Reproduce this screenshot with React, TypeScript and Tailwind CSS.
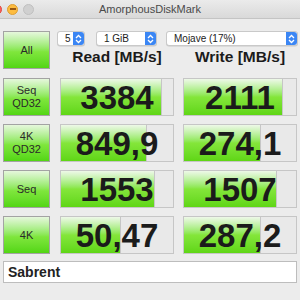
import React from "react";

type Row = {
	label: string[];
	read: string;
	readPct: number;
	write: string;
	writePct: number;
};

const rows: Row[] = [
	{ label: ["Seq", "QD32"], read: "3384", readPct: 90, write: "2111", writePct: 88 },
	{ label: ["4K", "QD32"], read: "849,9", readPct: 77, write: "274,1", writePct: 69 },
	{ label: ["Seq"], read: "1553", readPct: 84, write: "1507", writePct: 83 },
	{ label: ["4K"], read: "50,47", readPct: 54, write: "287,2", writePct: 69 },
];

function Stepper() {
	return (
		<div className="w-[11px] h-full bg-[#3b86f4] rounded-r-[3px] flex items-center justify-center">
			<svg width="7" height="10" viewBox="0 0 7 10" fill="none" stroke="white" strokeWidth="1.3">
				<path d="M1 4 L3.5 1.5 L6 4" />
				<path d="M1 6 L3.5 8.5 L6 6" />
			</svg>
		</div>
	);
}

function Select({ value, className }: { value: string; className: string }) {
	return (
		<div
			className={`h-[15px] bg-white border border-[#c9c9c9] rounded-[3px] flex items-stretch shadow-[0_0.5px_0.5px_rgba(0,0,0,0.15)] ${className}`}
		>
			<span className="flex-1 pl-[7px] text-[10px] leading-[13px] text-[#222]">{value}</span>
			<Stepper />
		</div>
	);
}

function GreenButton({ label }: { label: string[] }) {
	return (
		<div className="w-[47px] h-[38px] shrink-0 border border-[#a3a3a3] bg-linear-to-b from-[#e6f7dc] via-[#7fe63c] via-55% to-[#52d612] flex flex-col items-center justify-center text-[11px] leading-[13px] text-[#2a2a2a]">
			{label.map((l) => (
				<span key={l}>{l}</span>
			))}
		</div>
	);
}

function Cell({ value, pct }: { value: string; pct: number }) {
	return (
		<div className="relative w-[114px] h-[38px] border border-[#c6c6c6] bg-[#e9e9e9] flex">
			<div
				className="h-full bg-linear-to-b from-[#eef8e8] via-[#84e63a] via-50% to-[#5fd614] border-r border-[#c6c6c6]"
				style={{ width: `${pct}%` }}
			/>
			<span className="absolute inset-0 flex items-center justify-center font-bold text-[33px] leading-none text-[#1b1b1b]">
				{value}
			</span>
		</div>
	);
}

export default function App() {
	return (
		<div
			className="w-[300px] h-[300px] overflow-hidden bg-[#ececec] flex flex-col"
			style={{ fontFamily: '"Liberation Sans", Arial, sans-serif' }}
		>
			{/* title bar */}
			<div className="h-[19px] shrink-0 bg-linear-to-b from-[#ebebeb] to-[#d9d9d9] border-b border-[#c4c4c4] grid grid-cols-[1fr_auto_1fr] items-center">
				<div className="flex items-center gap-[5px] ml-[-9px]">
					<span className="w-[11px] h-[11px] rounded-full bg-[#fc605b] border border-[#de4a43]" />
					<span className="w-[11px] h-[11px] rounded-full bg-[#fdbc40] border border-[#de9f34] flex items-center justify-center">
						<span className="w-[6px] h-[1.5px] bg-[#985712]" />
					</span>
					<span className="w-[11px] h-[11px] rounded-full bg-[#d0d0d0] border border-[#c0c0c0]" />
				</div>
				<span className="text-[11px] text-[#4a4a4a]">AmorphousDiskMark</span>
				<div />
			</div>

			<div className="flex flex-col px-[3px] pt-[12px]">
				{/* top block */}
				<div className="flex">
					<GreenButton label={["All"]} />
					<div className="flex flex-col ml-[7px] flex-1">
						<div className="flex">
							<Select value="5" className="w-[28px]" />
							<Select value="1 GiB" className="w-[61px] ml-[11px]" />
							<Select value="Mojave (17%)" className="w-[132px] ml-[9px]" />
						</div>
						<div className="flex ml-[3px] h-[23px] items-center pb-[1px]">
							<span className="w-[114px] text-center font-bold text-[15.5px] text-[#1b1b1b]">Read [MB/s]</span>
							<span className="w-[114px] ml-[9px] text-center font-bold text-[15.5px] text-[#1b1b1b]">Write [MB/s]</span>
						</div>
					</div>
				</div>

				{/* result rows */}
				<div className="flex flex-col gap-[8px] mt-[9px]">
					{rows.map((r) => (
						<div key={r.label.join("-") + r.read} className="flex">
							<GreenButton label={r.label} />
							<div className="ml-[10px]">
								<Cell value={r.read} pct={r.readPct} />
							</div>
							<div className="ml-[9px]">
								<Cell value={r.write} pct={r.writePct} />
							</div>
						</div>
					))}
				</div>

				{/* comment field */}
				<div className="mt-[7px] h-[22px] w-[294px] bg-white border border-[#bdbdbd] flex items-center pl-[4px]">
					<span className="font-bold text-[14px] text-[#222]">Sabrent</span>
				</div>
			</div>
		</div>
	);
}
